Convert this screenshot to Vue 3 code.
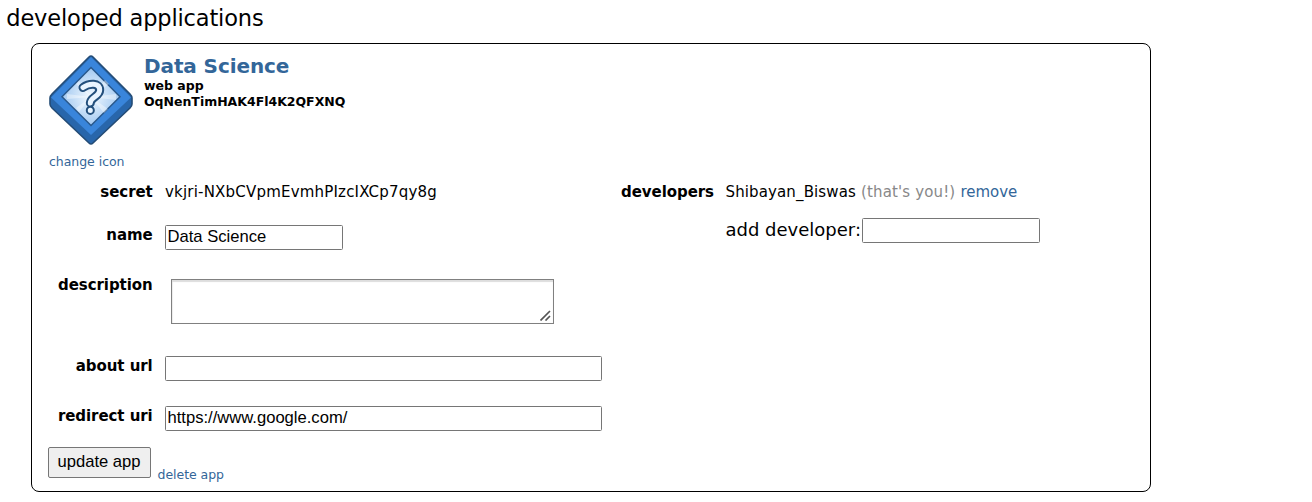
<script setup>
import { ref } from 'vue'
const name = ref('Data Science')
const description = ref('')
const aboutUrl = ref('')
const redirectUri = ref('https://www.google.com/')
const newDeveloper = ref('')
</script>

<template>
  <main class="page">
    <h1 class="heading">developed applications</h1>
    <section class="app">
      <header class="summary">
        <svg class="icon" viewBox="0 0 84 92" width="84" height="92">
          <defs>
            <radialGradient id="face">
              <stop offset="0" stop-color="#f2f9ff" />
              <stop offset="1" stop-color="#a3c9f1" />
            </radialGradient>
          </defs>
          <path d="M42 2Q43 2 44 3L81 40Q83 42 83 44V50Q83 52 81 54L44 89Q42 91 40 89L3 54Q1 52 1 50V44Q1 42 3 40L40 3Q41 2 42 2Z" fill="#2866ab" stroke="#244c76" stroke-width="1.6" />
          <path d="M42 3 82 43.500 42 81 2 43.500Z" fill="#3985db" />
          <path d="M42 13.500 71 42.700 42 71.500 13 42.700Z" fill="url(#face)" stroke="#28588c" stroke-width="1.5" />
          <path d="M42 43 18 40V45ZM42 43 27 30 30 27ZM42 43 56 26 60 30ZM42 43 67 40V46ZM42 43 59 55 55 59ZM42 43 30 58 27 54Z" fill="#fff" opacity=".4" />
          <g fill="none" stroke-linecap="round" stroke-linejoin="round">
            <path d="M34 33.500C40 29 50.700 28.500 50.700 36C50.700 42.500 41.500 43 41.300 49M41.300 56.300V56.400" stroke="#234f7c" stroke-width="9" />
            <path d="M34 33.500C40 29 50.700 28.500 50.700 36C50.700 42.500 41.500 43 41.300 49M41.300 56.300V56.400" stroke="#e9f4ff" stroke-width="5" />
          </g>
        </svg>
        <div class="title">
          <h2><a>Data Science</a></h2>
          <h3>web app</h3>
          <h3>OqNenTimHAK4Fl4K2QFXNQ</h3>
        </div>
      </header>
      <a class="small change">change icon</a>
      <div class="columns">
        <div class="form details">
          <b>secret</b><span class="secret">vkjri-NXbCVpmEvmhPIzcIXCp7qy8g</span>
          <b class="drop">name</b><input v-model="name">
          <b class="drop">description</b>
          <div class="area">
            <textarea v-model="description"></textarea>
            <svg class="grip" viewBox="0 0 11 11" width="11" height="11"><path d="M.5 10.500 10 1M5.500 10.500 10 6" stroke="#555" stroke-width="1.7" /></svg>
          </div>
          <b class="drop">about url</b><input v-model="aboutUrl" class="wide">
          <b class="drop">redirect uri</b><input v-model="redirectUri" class="wide">
        </div>
        <div class="form developers">
          <b>developers</b>
          <div class="developer"><span class="user">Shibayan_Biswas</span><span class="you">(that's you!)</span><a>remove</a></div>
          <label class="add"><span>add developer:</span><input v-model="newDeveloper"></label>
        </div>
      </div>
      <footer class="actions">
        <button>update app</button>
        <a class="small">delete app</a>
      </footer>
    </section>
  </main>
</template>

<style>
body { background: #fff; }
</style>

<style scoped>
.page { padding-top: 5px; font: 15px/18px "DejaVu Sans", Verdana, sans-serif; color: #000; white-space: nowrap; }
.heading { margin: 0 0 12px 6.3px; height: 26px; font-size: 22.5px; line-height: 26px; font-weight: 400; letter-spacing: -0.16px; }
.app { box-sizing: border-box; margin-left: 31px; width: 1120px; height: 449px; padding-top: 10px; border: 1px solid #000; border-radius: 8px; }
a { color: #369; }
.small { font-size: 12.5px; line-height: 16px; letter-spacing: -0.04px; }
.summary { display: flex; height: 92px; padding-left: 17px; }
.icon { display: block; }
.title { padding-left: 11px; }
h2 { margin: 0; font-size: 20px; line-height: 24px; letter-spacing: -0.1px; }
h3 { margin: 0; font-size: 12.5px; line-height: 16px; letter-spacing: -0.01px; }
.change { display: block; margin: 8px 0 0 17px; height: 16px; }
.columns { display: flex; margin-top: 13px; height: 248px; }
.form { display: grid; align-items: start; }
.form b { text-align: right; letter-spacing: -0.06px; }
.form .drop { padding-top: 1px; }
.details { grid-template: 42px 50px 81px 50px 25px / 120.7px 437px; column-gap: 12.3px; }
.developers { grid-template: 35px 25px / 112px auto; column-gap: 11.5px; align-content: start; }
.secret { letter-spacing: 0.2px; }
input, textarea { box-sizing: border-box; display: block; width: 178px; height: 25px; margin: 0; padding: 0 2px 2px 1.5px; border: 1px solid #767676; border-radius: 1.5px; background: #fff; color: #000; font: 16.6px "Liberation Sans", Arial, sans-serif; outline: none; }
.wide { width: 437px; }
.area { position: relative; width: 383px; height: 45px; margin: 4px 0 0 6px; }
textarea { width: 383px; height: 45px; resize: none; border-color: #808080; border-radius: 0; box-shadow: inset 0 2px 1px #ddd, inset 1px 0 1px #eee; }
.grip { position: absolute; right: 3px; bottom: 3px; }
.developer { display: flex; gap: 5px; }
.user { letter-spacing: 0.13px; }
.you { color: #888; letter-spacing: 0.15px; }
.add { grid-column: 2; display: flex; font-size: 18px; line-height: 21px; }
.add span { width: 136.5px; padding-top: 1px; }
.actions { display: flex; margin-top: 16px; padding-left: 16px; }
button { box-sizing: border-box; width: 103px; height: 31px; padding: 0 1px 1px 0; border: 1px solid #767676; border-radius: 2px; background: #efefef; color: #000; font: 16.6px "Liberation Sans", Arial, sans-serif; }
.actions a { margin: 20px 0 0 6.5px; }
</style>
